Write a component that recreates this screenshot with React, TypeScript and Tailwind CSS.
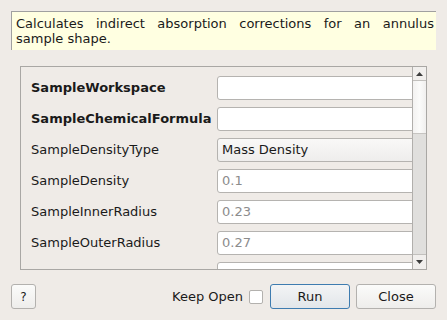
import React from "react";

const rows: { label: string; bold?: boolean; value?: string; placeholder?: string; select?: boolean }[] = [
  { label: "SampleWorkspace", bold: true },
  { label: "SampleChemicalFormula", bold: true },
  { label: "SampleDensityType", value: "Mass Density", select: true },
  { label: "SampleDensity", placeholder: "0.1" },
  { label: "SampleInnerRadius", placeholder: "0.23" },
  { label: "SampleOuterRadius", placeholder: "0.27" },
  { label: "" },
];

export default function App() {
  return (
    <div
      className="w-[447px] h-[320px] bg-[#efebe7] text-[13px] text-[#1a1a1a] overflow-hidden flex flex-col"
      style={{ fontFamily: '"DejaVu Sans", sans-serif' }}
    >
      <div className="mt-[11px] ml-[11px] w-[425px] h-[39px] bg-[#ffffe1] border-t border-l border-[#a0a0a0] pl-[4px] pr-[2px] pt-[4px] leading-[15px] text-justify [text-align-last:left]">
        Calculates indirect absorption corrections for an annulus sample shape.
      </div>

      <div className="mt-[16px] ml-[20px] w-[407px] h-[204px] border border-[#a9a7a4] flex">
        <div className="flex-1 overflow-hidden pt-[9px] pl-[10px] flex flex-col gap-[7px]">
          {rows.map((r, i) => (
            <div key={i} className="flex items-center h-[24px] shrink-0">
              <div className={`w-[186px] shrink-0 ${r.bold ? "font-bold" : ""}`}>{r.label}</div>
              <div
                className={`w-[200px] h-[24px] shrink-0 border border-[#b5b3b0] rounded-[3px] flex items-center pl-[4px] ${
                  r.select ? "bg-gradient-to-b from-[#f9f8f7] to-[#eeedec] text-[#1a1a1a]" : "bg-white"
                }`}
              >
                {r.value && <span>{r.value}</span>}
                {r.placeholder && <span className="text-[#8c8c8c]">{r.placeholder}</span>}
              </div>
            </div>
          ))}
        </div>
        <div className="w-[14px] border-l border-[#b1afac] flex flex-col bg-[#e0dfdd]">
          <div className="h-[14px] border-b border-[#c2c0bd] bg-[#f1efed] flex items-center justify-center">
            <svg width="7" height="4" viewBox="0 0 7 4">
              <polygon points="3.5,0 7,4 0,4" fill="#3d3d3d" />
            </svg>
          </div>
          <div className="h-[53px] border-b border-[#c6c4c1] bg-gradient-to-r from-[#f3f2f1] via-[#fbfbfa] to-[#f0efee]" />
          <div className="flex-1" />
          <div className="h-[15px] border-t border-[#c2c0bd] bg-[#f1efed] flex items-center justify-center">
            <svg width="7" height="4" viewBox="0 0 7 4">
              <polygon points="0,0 7,0 3.5,4" fill="#3d3d3d" />
            </svg>
          </div>
        </div>
      </div>

      <div className="mt-[14px] flex items-center h-[25px] pl-[11px] pr-[11px]">
        <button className="w-[25px] h-[25px] border border-[#b3b1ae] rounded-[3px] bg-gradient-to-b from-[#fbfbfa] to-[#eeedeb] text-[12px] flex items-center justify-center">
          ?
        </button>
        <div className="flex-1" />
        <span>Keep Open</span>
        <div className="ml-[6px] w-[14px] h-[14px] border border-[#b3b1ae] bg-white rounded-[2px]" />
        <button className="ml-[7px] w-[80px] h-[25px] border border-[#3e7cb0] rounded-[3px] bg-gradient-to-b from-[#f3f4f5] to-[#e2e6ea] flex items-center justify-center">
          Run
        </button>
        <button className="ml-[6px] w-[80px] h-[25px] border border-[#b3b1ae] rounded-[3px] bg-gradient-to-b from-[#fbfbfa] to-[#eeedeb] flex items-center justify-center">
          Close
        </button>
      </div>
    </div>
  );
}
